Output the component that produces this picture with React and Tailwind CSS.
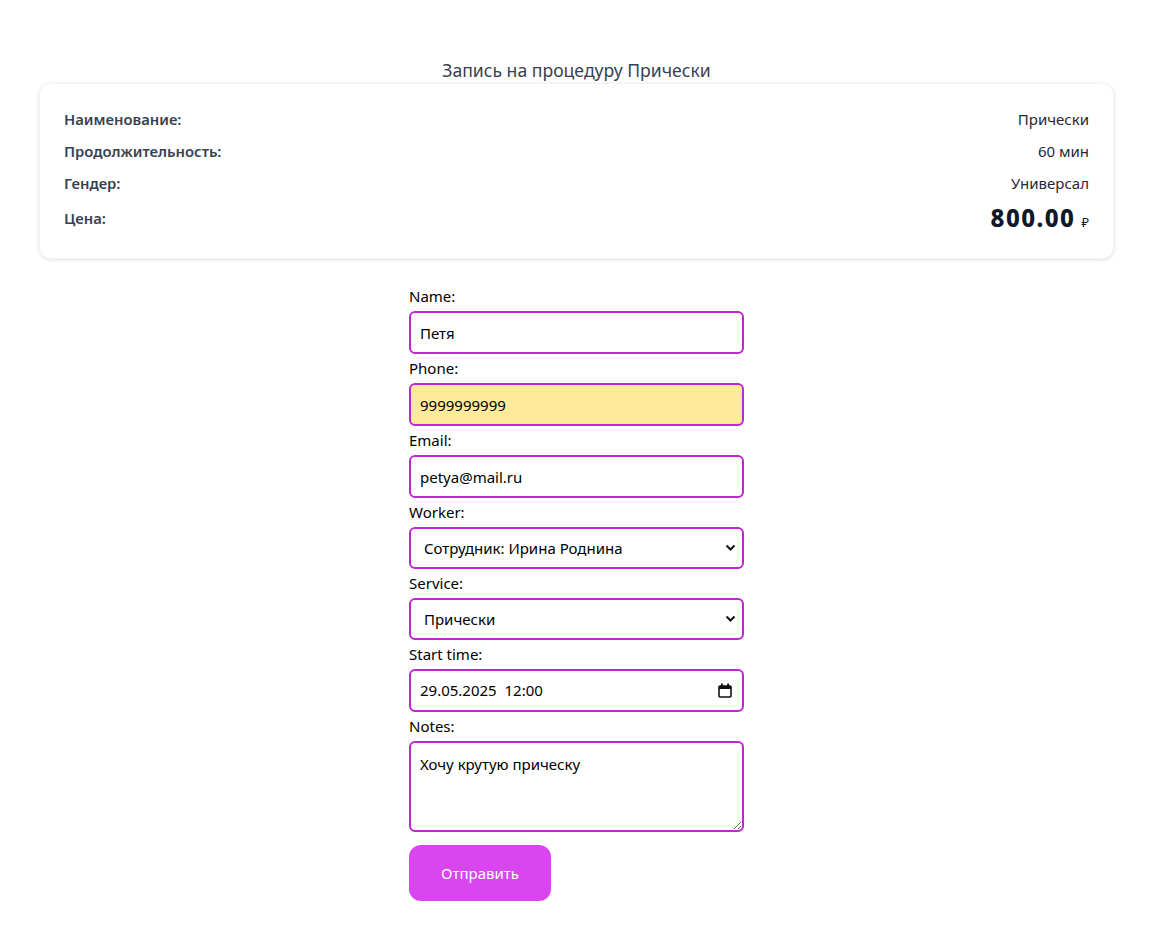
import React from "react";

function Field({ label, children }) {
  return (
    <div className="flex flex-col">
      <label className="h-6 leading-6 text-[15px] text-black">{label}</label>
      <div className="mt-[3px] mb-[2px]">{children}</div>
    </div>
  );
}

const boxCls =
  "w-full h-[43px] rounded-md border-2 border-[#c026d3] px-[9px] text-[15px] text-black outline-none";
const selCls =
  "w-full h-[42px] rounded-md border-2 border-[#c026d3] pl-[13px] text-[15px] text-black bg-white flex items-center";

function Chevron() {
  return (
    <svg className="absolute right-[8px] top-[17px]" width="11" height="8" viewBox="0 0 11 8">
      <path d="M1.5 1.5 L5.5 5.5 L9.5 1.5" stroke="#111" strokeWidth="2" fill="none" />
    </svg>
  );
}

export default function App() {
  return (
    <div className="min-h-[952px] w-[1153px] bg-white font-['Noto_Sans','Open_Sans',sans-serif]">
      <div className="pt-[58px] px-[39px] pb-4">
        <h1 className="text-center text-[17.6px] leading-6 text-[#374151]">
          Запись на процедуру Прически
        </h1>
        <div className="mt-[1px] rounded-xl bg-white shadow-[0_1px_4px_rgba(0,0,0,0.12)] border border-gray-100 px-6 pt-[23px] pb-[25px]">
          <div className="flex justify-between h-8 leading-6">
            <span className="font-semibold text-[14.8px] text-[#374151]">Наименование:</span>
            <span className="text-[15px] text-[#1f2937]">Прически</span>
          </div>
          <div className="flex justify-between h-8 leading-6">
            <span className="font-semibold text-[14.8px] text-[#374151]">Продолжительность:</span>
            <span className="text-[15px] text-[#1f2937]">60 мин</span>
          </div>
          <div className="flex justify-between h-8 leading-6">
            <span className="font-semibold text-[14.8px] text-[#374151]">Гендер:</span>
            <span className="text-[15px] text-[#1f2937]">Универсал</span>
          </div>
          <div className="flex justify-between items-center h-[30px]">
            <span className="font-semibold text-[14.8px] text-[#374151]">Цена:</span>
            <span className="flex items-baseline">
              <span className="text-[24px] font-extrabold text-[#111827] tracking-[0.06em]">800.00</span>
              <span className="ml-[6px] text-[13px] text-[#111827]">₽</span>
            </span>
          </div>
        </div>
      </div>

      <form className="mx-auto w-[335px] mt-[9px] flex flex-col" onSubmit={(e) => e.preventDefault()}>
        <Field label="Name:">
          <input className={boxCls + " bg-white"} defaultValue="Петя" />
        </Field>
        <Field label="Phone:">
          <input className={boxCls + " bg-[#fdea9b]"} defaultValue="9999999999" />
        </Field>
        <Field label="Email:">
          <input className={boxCls + " bg-white"} defaultValue="petya@mail.ru" />
        </Field>
        <Field label="Worker:">
          <div className="relative">
            <div className={selCls}>Сотрудник: Ирина Роднина</div>
            <Chevron />
          </div>
        </Field>
        <Field label="Service:">
          <div className="relative">
            <div className={selCls}>Прически</div>
            <Chevron />
          </div>
        </Field>
        <Field label="Start time:">
          <div className="relative">
            <div className={boxCls + " bg-white flex items-center"}>29.05.2025&nbsp;&nbsp;12:00</div>
            <svg className="absolute right-[12px] top-[14px]" width="14" height="15" viewBox="0 0 14 15">
              <rect x="1" y="3" width="12" height="11" rx="1" stroke="#111" strokeWidth="1.6" fill="none" />
              <rect x="1" y="3" width="12" height="3" fill="#111" />
              <rect x="3" y="0.5" width="1.8" height="3" fill="#111" />
              <rect x="9.2" y="0.5" width="1.8" height="3" fill="#111" />
            </svg>
          </div>
        </Field>
        <Field label="Notes:">
          <textarea
            className="block w-full h-[91px] rounded-md border-2 border-[#c026d3] px-[9px] py-[10px] text-[15px] text-black outline-none resize-y"
            defaultValue="Хочу крутую прическу"
          />
        </Field>
        <button
          type="submit"
          className="mt-[11px] w-[142px] h-[56px] rounded-xl bg-[#d946ef] text-white text-[15px]"
        >
          Отправить
        </button>
      </form>
    </div>
  );
}
